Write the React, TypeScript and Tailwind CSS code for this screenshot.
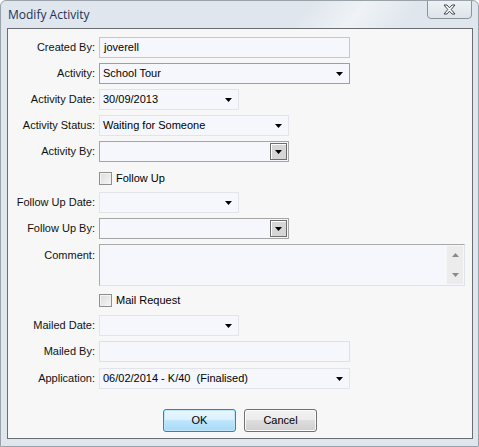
import React from "react";

const Arrow = () => (
  <svg width="7" height="4" viewBox="0 0 7 4" className="block">
    <polygon points="0,0 7,0 3.5,4" fill="#000" />
  </svg>
);

function Row({ label, children, className = "", top = false }: { label: string; children: React.ReactNode; className?: string; top?: boolean }) {
  return (
    <div className={`flex ${top ? "items-start" : "items-center"} ${className}`}>
      <div className={`w-[87px] shrink-0 text-right ${top ? "pt-[3px]" : ""}`}>{label}</div>
      <div className="ml-[4px]">{children}</div>
    </div>
  );
}

function TextField({ w, value = "", border }: { w: string; value?: string; border: string }) {
  return (
    <div className={`${w} h-[21px] border ${border} bg-[#f5f7fd] flex items-center pl-[4px] text-black whitespace-pre`}>{value}</div>
  );
}

function DropField({ w, value = "", border }: { w: string; value?: string; border: string }) {
  return (
    <div className={`${w} h-[21px] border ${border} bg-[#f5f7fd] flex items-center justify-between pl-[3px] pr-[6px] text-black`}>
      <span className="whitespace-pre">{value}</span>
      <Arrow />
    </div>
  );
}

function ComboBtnField({ w }: { w: string }) {
  return (
    <div className={`${w} h-[21px] border border-[#a5a5a5] bg-[#f5f7fd] flex items-center justify-end pr-[1px]`}>
      <div className="w-[17px] h-[17px] border border-[#6d6d6d] bg-[#d6d6d6] flex items-center justify-center shadow-[inset_1px_1px_0_#ffffff]">
        <Arrow />
      </div>
    </div>
  );
}

function Check({ label }: { label: string }) {
  return (
    <div className="flex items-center pl-[91px]">
      <div className="w-[13px] h-[13px] border border-[#8e8f8f] bg-gradient-to-br from-[#dcdcdc] to-[#f6f6f6] shadow-[inset_1px_1px_0_#f4f4f4]" />
      <span className="ml-[4px] text-black">{label}</span>
    </div>
  );
}

export default function App() {
  return (
    <div className="w-[479px] h-[447px] overflow-hidden bg-[#dfe6ed] font-['Liberation_Sans',Arial,sans-serif] text-[11px] text-[#111] relative rounded-t-[6px] border border-[#9aa2aa]">
      <div className="absolute left-[300px] top-0 w-[110px] h-[28px] bg-gradient-to-r from-transparent via-[#f3f6f9] to-transparent opacity-80 skew-x-[-35deg]" />
      <div className="relative flex items-start h-[27px]">
        <div className="pl-[7px] pt-[5px] text-[12px] text-[#1e3157] font-['Open_Sans','Liberation_Sans',sans-serif]">Modify Activity</div>
        <div className="ml-auto mr-[6px] w-[45px] h-[19px] -mt-[1px] rounded-b-[4px] border border-[#8b939b] bg-gradient-to-b from-[#eef2f5] to-[#dde4ea] flex items-center justify-center">
          <svg width="13" height="11" viewBox="0 0 13 11">
            <path d="M1 1 H4 L6.5 3.8 L9 1 H12 L8.2 5.5 L12 10 H9 L6.5 7.2 L4 10 H1 L4.8 5.5 Z" fill="#ffffff" stroke="#3c4650" strokeWidth="1" strokeLinejoin="round" />
          </svg>
        </div>
      </div>
      <div className="relative ml-[6px] w-[466px] h-[411px] border border-[#6a6e72] bg-[#f7f7f7] pt-[8px] flex flex-col">
        <Row label="Created By:">
          <TextField w="w-[251px]" value="joverell" border="border-[#b6cbe2]" />
        </Row>
        <Row label="Activity:" className="mt-[5px]">
          <DropField w="w-[251px]" value="School Tour" border="border-[#7ea4cf]" />
        </Row>
        <Row label="Activity Date:" className="mt-[5px]">
          <DropField w="w-[140px]" value="30/09/2013" border="border-[#e1e4ea]" />
        </Row>
        <Row label="Activity Status:" className="mt-[5px]">
          <DropField w="w-[190px]" value="Waiting for Someone" border="border-[#e1e4ea]" />
        </Row>
        <Row label="Activity By:" className="mt-[5px]">
          <ComboBtnField w="w-[190px]" />
        </Row>
        <div className="mt-[8px] h-[14px]">
          <Check label="Follow Up" />
        </div>
        <Row label="Follow Up Date:" className="mt-[8px]">
          <DropField w="w-[140px]" border="border-[#e1e4ea]" />
        </Row>
        <Row label="Follow Up By:" className="mt-[5px]">
          <ComboBtnField w="w-[190px]" />
        </Row>
        <Row label="Comment:" className="mt-[5px]" top>
          <div className="w-[366px] h-[42px] border border-[#a9a9a9] border-b-[#dde3ea] border-r-[#dde3ea] bg-[#f5f7fd] flex justify-end p-[1px]">
            <div className="w-[17px] h-full bg-[#ececec] border-l border-[#f5f5f5] flex flex-col items-center justify-between py-[7px]">
              <svg width="7" height="4" viewBox="0 0 7 4"><polygon points="3.5,0 7,4 0,4" fill="#8a8a8a" /></svg>
              <svg width="7" height="4" viewBox="0 0 7 4"><polygon points="0,0 7,0 3.5,4" fill="#8a8a8a" /></svg>
            </div>
          </div>
        </Row>
        <div className="mt-[6px] h-[14px]">
          <Check label="Mail Request" />
        </div>
        <Row label="Mailed Date:" className="mt-[9px]">
          <DropField w="w-[140px]" border="border-[#e1e4ea]" />
        </Row>
        <Row label="Mailed By:" className="mt-[5px]">
          <TextField w="w-[251px]" border="border-[#dde1e7]" />
        </Row>
        <Row label="Application:" className="mt-[6px]">
          <DropField w="w-[251px]" value="06/02/2014 - K/40  (Finalised)" border="border-[#e1e4ea]" />
        </Row>
        <div className="mt-[20px] flex pl-[155px] gap-[8px]">
          <button className="w-[73px] h-[23px] rounded-[3px] border border-[#3c7fb1] bg-[linear-gradient(#eaf6fd_0%,#d9f0fc_50%,#bee6fd_50%,#a7d9f5_100%)] shadow-[inset_0_0_0_1px_#bfe6fb] text-black text-[11px] font-['Liberation_Sans',sans-serif]">OK</button>
          <button className="w-[73px] h-[23px] rounded-[3px] border border-[#707070] bg-[linear-gradient(#f2f2f2_0%,#ebebeb_50%,#dddddd_50%,#cfcfcf_100%)] shadow-[inset_0_0_0_1px_#fcfcfc] text-black text-[11px] font-['Liberation_Sans',sans-serif]">Cancel</button>
        </div>
      </div>
    </div>
  );
}
